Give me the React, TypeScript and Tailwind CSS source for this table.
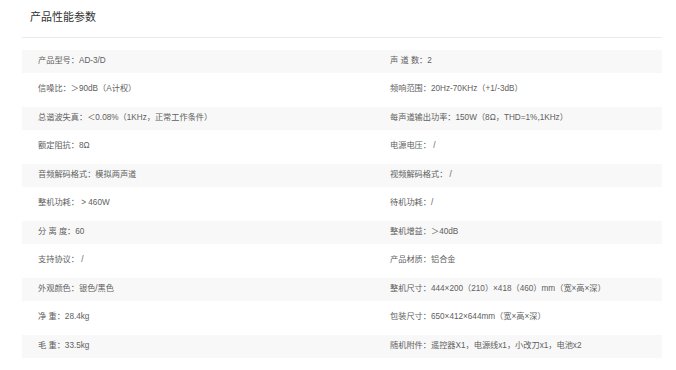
const specs: [string, string][] = [
  ["产品型号：AD-3/D", "声 道 数：2"],
  ["信噪比：＞90dB（A计权）", "频响范围：20Hz-70KHz（+1/-3dB）"],
  ["总谐波失真：＜0.08%（1KHz，正常工作条件）", "每声道输出功率：150W（8Ω，THD=1%,1KHz）"],
  ["额定阻抗：8Ω", "电源电压： /"],
  ["音频解码格式：模拟两声道", "视频解码格式： /"],
  ["整机功耗： > 460W", "待机功耗：/"],
  ["分 离 度：60", "整机增益：＞40dB"],
  ["支持协议： /", "产品材质：铝合金"],
  ["外观颜色：银色/黑色", "整机尺寸：444×200（210）×418（460）mm（宽×高×深）"],
  ["净 重：28.4kg", "包装尺寸：650×412×644mm（宽×高×深）"],
  ["毛 重：33.5kg", "随机附件：遥控器X1，电源线x1，小改刀x1，电池x2"],
];

export default function App() {
  return (
    <div
      className="w-[676px] h-[370px] bg-white overflow-hidden"
      style={{ fontFamily: '"Liberation Sans", "Noto Sans CJK SC", sans-serif' }}
    >
      <div className="mx-[22px] w-[640px]">
        <div className="h-[38px] border-b border-[#ececec] pl-[8px] pt-[10px]">
          <h2 className="text-[11px] leading-[14px] text-[#333]">产品性能参数</h2>
        </div>
        <div className="flex flex-col gap-[5.5px] pt-[11.5px]">
          {specs.map(([left, right], i) => (
            <div
              key={i}
              className={
                "flex h-[23px] items-center text-[8.2px] text-[#606060] " +
                (i % 2 === 0 ? "bg-[#f8f8f8]" : "bg-white")
              }
            >
              <div className="w-[368px] shrink-0 pl-[16px] whitespace-nowrap">{left}</div>
              <div className="whitespace-nowrap">{right}</div>
            </div>
          ))}
        </div>
      </div>
    </div>
  );
}
